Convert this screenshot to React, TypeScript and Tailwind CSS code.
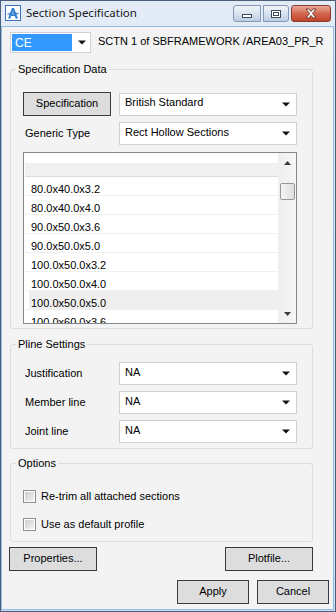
import React from 'react';

const sections = [
  '80.0x40.0x3.2',
  '80.0x40.0x4.0',
  '90.0x50.0x3.6',
  '90.0x50.0x5.0',
  '100.0x50.0x3.2',
  '100.0x50.0x4.0',
  '100.0x50.0x5.0',
  '100.0x60.0x3.6',
];

function Arrow() {
  return (
    <svg width="8" height="5" viewBox="0 0 8 5">
      <path d="M0 0.5h8L4 4.5z" fill="#111" />
    </svg>
  );
}

function Combo({ value, wide = true }: { value: string; wide?: boolean }) {
  return (
    <div
      className={`flex h-[23px] ${wide ? 'w-[178px]' : 'w-[81px]'} items-center justify-between border border-[#cfd1d4] bg-white pl-[5px] pr-[6px]`}
    >
      <span className="pb-[3px]">{value}</span>
      <Arrow />
    </div>
  );
}

function Button({ label, className = '' }: { label: string; className?: string }) {
  return (
    <div
      className={`flex h-[24px] items-center justify-center border border-[#3a3a3a] bg-[#dddddd] pb-[1px] ${className}`}
    >
      {label}
    </div>
  );
}

function Check({ label }: { label: string }) {
  return (
    <div className="flex h-[15px] items-center">
      <div className="ml-[12px] h-[13px] w-[13px] border border-[#8e8f8f] bg-white p-[1px]">
        <div className="h-full w-full bg-gradient-to-br from-[#cfcfcf] to-[#f4f4f4]" />
      </div>
      <span className="ml-[5px] text-[11px]">{label}</span>
    </div>
  );
}

function GroupLabel({ text }: { text: string }) {
  return (
    <div className="-mt-[7px] ml-[5px] h-[13px] w-fit bg-[#f3f3f3] px-[2px] leading-[13px]">
      {text}
    </div>
  );
}

function Logo() {
  return (
    <svg width="16" height="16" viewBox="0 0 16 16">
      <rect x="0.5" y="0.5" width="15" height="15" fill="#ffffff" stroke="#3b73b6" />
      <path d="M3 13.5L7 3h2l4 10.5h-2.3L9.8 11H6.2l-0.9 2.5z M6.8 9.3h2.4L8 5.8z" fill="#2f7fd0" />
      <path d="M2.5 9.5c2.5-1.5 7.5-1.8 11-0.6" stroke="#2f7fd0" strokeWidth="1.2" fill="none" />
    </svg>
  );
}

function CaptionButtons() {
  return (
    <div className="ml-auto mr-[4px] mt-[4px] flex gap-[2px]">
      <div className="flex h-[17px] w-[28px] items-end justify-center rounded-l-[3px] border border-[#8398b5] bg-gradient-to-b from-[#f1f5fa] via-[#d9e3ef] to-[#bccde3] pb-[3px]">
        <div className="h-[4px] w-[10px] border border-[#3d4a5c] bg-white" />
      </div>
      <div className="flex h-[17px] w-[26px] items-center justify-center rounded-r-[3px] border border-[#8398b5] bg-gradient-to-b from-[#f1f5fa] via-[#d9e3ef] to-[#bccde3]">
        <div className="h-[8px] w-[10px] border border-[#3d4a5c] bg-white p-[1px]">
          <div className="h-full w-full border border-[#3d4a5c]" />
        </div>
      </div>
      <div className="flex h-[17px] w-[40px] items-center justify-center rounded-[3px] border border-[#8a3b2f] bg-gradient-to-b from-[#e9a99a] via-[#d2674f] to-[#c2442b]">
        <svg width="14" height="11" viewBox="0 0 14 11">
          <path
            d="M2 1h3l2 2.5L9 1h3L8.5 5.5 12 10H9L7 7.5 5 10H2l3.5-4.5z"
            fill="#ffffff"
            stroke="#5a2219"
            strokeWidth="0.8"
          />
        </svg>
      </div>
    </div>
  );
}

export default function App() {
  return (
    <div className="flex h-[612px] w-[336px] flex-col border border-[#4d6079] bg-gradient-to-b from-[#e3ecf6] to-[#cbdcef] font-['Liberation_Sans',Arial,sans-serif] text-[11px] text-black">
      {/* title bar */}
      <div className="flex h-[25px] shrink-0 items-start">
        <div className="ml-[4px] mt-[4px]">
          <Logo />
        </div>
        <span className="ml-[5px] mt-[4px] font-['Noto_Sans',sans-serif] text-[11.5px] leading-[16px] text-[#1a1a1a]">
          Section Specification
        </span>
        <CaptionButtons />
      </div>

      {/* client area */}
      <div className="mb-[1px] mr-[1px] flex flex-1 flex-col border border-[#93bce6] bg-[#f3f3f3] pl-[7px]">
        <div className="mt-[5px] flex items-center">
          <div className="ml-[1px] flex h-[21px] w-[81px] items-center justify-between border border-[#cfd1d4] bg-white pl-[1px] pr-[4px]">
            <div className="flex h-[17px] w-[60px] items-center bg-[#3399ff] pl-[3px] text-[12px] text-white">CE</div>
            <Arrow />
          </div>
          <span className="ml-[7px] pb-[2px]">SCTN 1 of SBFRAMEWORK /AREA03_PR_R</span>
        </div>

        {/* Specification Data */}
        <div className="ml-[1px] mt-[16px] flex h-[260px] w-[303px] flex-col rounded-[3px] border border-[#d5dfe5] pl-[12px]">
          <div className="-ml-[12px]">
            <GroupLabel text="Specification Data" />
          </div>
          <div className="mt-[16px] flex items-center">
            <Button label="Specification" className="w-[88px]" />
            <div className="ml-[8px]">
              <Combo value="British Standard" />
            </div>
          </div>
          <div className="mt-[6px] flex items-center">
            <span className="ml-[2px] w-[94px]">Generic Type</span>
            <Combo value="Rect Hollow Sections" />
          </div>
          <div className="mt-[7px] flex h-[172px] w-[274px] border border-[#828790] bg-white pl-[1px]">
            <div className="flex-1 overflow-hidden">
              <div className="h-[10px]" />
              <div className="h-[14px] border-b border-[#dcdcdc] bg-[#f0f0f0]" />
              {sections.map((s, i) => (
                <div key={s} className="h-[19px] border-b border-[#f0f0f0] pl-[4px]">
                  <div className={`flex h-[18px] items-center pl-[2px] pt-[6px] ${i === 6 ? 'bg-[#efefef]' : ''}`}>{s}</div>
                </div>
              ))}
            </div>
            <div className="flex w-[18px] flex-col items-center bg-gradient-to-r from-[#eeeeee] to-[#f6f6f6]">
              <div className="mt-[8px]">
                <svg width="7" height="4" viewBox="0 0 7 4">
                  <path d="M0 4h7L3.5 0z" fill="#3c3c3c" />
                </svg>
              </div>
              <div className="mt-[18px] h-[17px] w-[15px] rounded-[2px] border border-[#979797] bg-gradient-to-r from-[#f5f5f5] to-[#dedede]" />
              <div className="mt-auto mb-[7px]">
                <svg width="7" height="4" viewBox="0 0 7 4">
                  <path d="M0 0h7L3.5 4z" fill="#3c3c3c" />
                </svg>
              </div>
            </div>
          </div>
        </div>

        {/* Pline Settings */}
        <div className="ml-[1px] mt-[15px] flex h-[105px] w-[303px] flex-col rounded-[3px] border border-[#d5dfe5] pl-[14px]">
          <div className="-ml-[14px]">
            <GroupLabel text="Pline Settings" />
          </div>
          <div className="mt-[11px] flex flex-col gap-[6px]">
            {['Justification', 'Member line', 'Joint line'].map((l) => (
              <div key={l} className="flex items-center">
                <span className="w-[94px]">{l}</span>
                <Combo value="NA" />
              </div>
            ))}
          </div>
        </div>

        {/* Options */}
        <div className="ml-[1px] mt-[14px] flex h-[79px] w-[303px] flex-col rounded-[3px] border border-[#d5dfe5]">
          <GroupLabel text="Options" />
          <div className="mt-[19px]">
            <Check label="Re-trim all attached sections" />
          </div>
          <div className="mt-[13px]">
            <Check label="Use as default profile" />
          </div>
        </div>

        <div className="mt-[5px] flex w-[304px] justify-between">
          <Button label="Properties..." className="w-[88px]" />
          <Button label="Plotfile..." className="w-[88px]" />
        </div>

        <div className="mt-[9px] flex justify-end gap-[8px] pr-[4px]">
          <Button label="Apply" className="w-[72px]" />
          <Button label="Cancel" className="w-[72px]" />
        </div>
      </div>
    </div>
  );
}
